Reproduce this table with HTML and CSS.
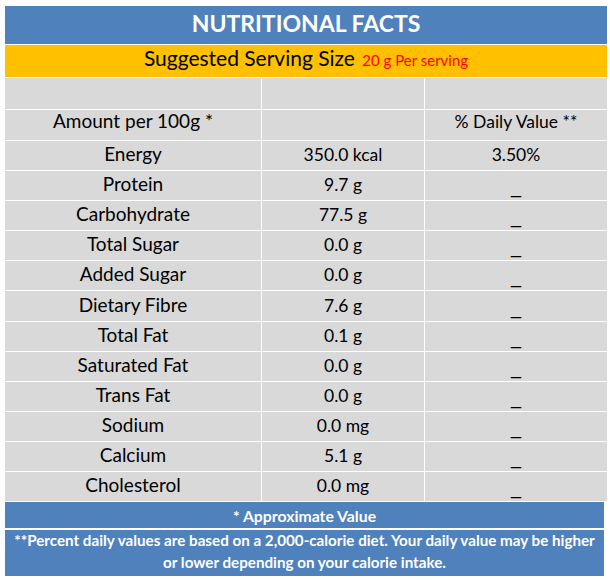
FILE: index.html
```html
<!DOCTYPE html>
<html lang="en">
<head>
<meta charset="utf-8">
<title>Nutritional Facts</title>
<link rel="stylesheet" href="styles.css">
</head>
<body>
<div class="sheet">
  <div class="title">NUTRITIONAL FACTS</div>
  <div class="serving">Suggested Serving Size <span class="serving-amt">20 g Per serving</span></div>
  <div class="grid">
    <div class="cell"></div><div class="cell"></div><div class="cell"></div>
    <div class="cell label head">Amount per 100g *</div><div class="cell head"></div><div class="cell head">% Daily Value **</div>

    <div class="cell label">Energy</div><div class="cell">350.0 kcal</div><div class="cell">3.50%</div>
    <div class="cell label">Protein</div><div class="cell">9.7 g</div><div class="cell dash">_</div>
    <div class="cell label">Carbohydrate</div><div class="cell">77.5 g</div><div class="cell dash">_</div>
    <div class="cell label">Total Sugar</div><div class="cell">0.0 g</div><div class="cell dash">_</div>
    <div class="cell label">Added Sugar</div><div class="cell">0.0 g</div><div class="cell dash">_</div>
    <div class="cell label">Dietary Fibre</div><div class="cell">7.6 g</div><div class="cell dash">_</div>
    <div class="cell label">Total Fat</div><div class="cell">0.1 g</div><div class="cell dash">_</div>
    <div class="cell label">Saturated Fat</div><div class="cell">0.0 g</div><div class="cell dash">_</div>
    <div class="cell label">Trans Fat</div><div class="cell">0.0 g</div><div class="cell dash">_</div>
    <div class="cell label">Sodium</div><div class="cell">0.0 mg</div><div class="cell dash">_</div>
    <div class="cell label">Calcium</div><div class="cell">5.1 g</div><div class="cell dash">_</div>
    <div class="cell label">Cholesterol</div><div class="cell">0.0 mg</div><div class="cell dash">_</div>
  </div>
  <div class="foot foot-approx">* Approximate Value</div>
  <div class="foot foot-note">**Percent daily values are based on a 2,000-calorie diet. Your daily value may be higher<br>or lower depending on your calorie intake.</div>
</div>
</body>
</html>
```

FILE: styles.css
```css
html, body {
  margin: 0;
  padding: 0;
  background: #ffffff;
}

body {
  font-family: Lato, "Liberation Sans", sans-serif;
  color: #000000;
}

.sheet {
  margin: 6px 0 0 5px;
  width: 602px;
  display: flex;
  flex-direction: column;
  gap: 1px;
}

.title {
  height: 38px;
  line-height: 34px;
  background: #4f81bd;
  color: #ffffff;
  font-weight: 700;
  font-size: 23px;
  text-align: center;
}

.serving {
  height: 32px;
  line-height: 26px;
  background: #ffc000;
  font-size: 21px;
  text-align: center;
}

.serving-amt {
  color: #ff0000;
  font-size: 15px;
  margin-left: 2px;
}

.grid {
  display: grid;
  grid-template-columns: 256px 162px 182px;
  grid-template-rows: 31px 30px;
  grid-auto-rows: 29.1px;
  gap: 1px;
  background: #ffffff;
}

.cell {
  background: #d9d9d9;
  font-size: 17.5px;
  display: flex;
  align-items: flex-end;
  justify-content: center;
  padding-bottom: 5px;
  box-sizing: border-box;
}

.cell.label {
  font-size: 19px;
}

.cell.head {
  padding-bottom: 8px;
}

.cell.dash {
  font-family: "Liberation Sans", Arial, sans-serif;
  font-size: 18px;
  line-height: 18px;
  padding-bottom: 4px;
}

.foot {
  width: 599px;
  background: #4f81bd;
  color: #ffffff;
  font-weight: 700;
  text-align: center;
}

.foot-approx {
  height: 26px;
  line-height: 27px;
  font-size: 15.8px;
}

.foot-note {
  margin-top: 1px;
  height: 46px;
  line-height: 21.5px;
  font-size: 15.2px;
}
```
